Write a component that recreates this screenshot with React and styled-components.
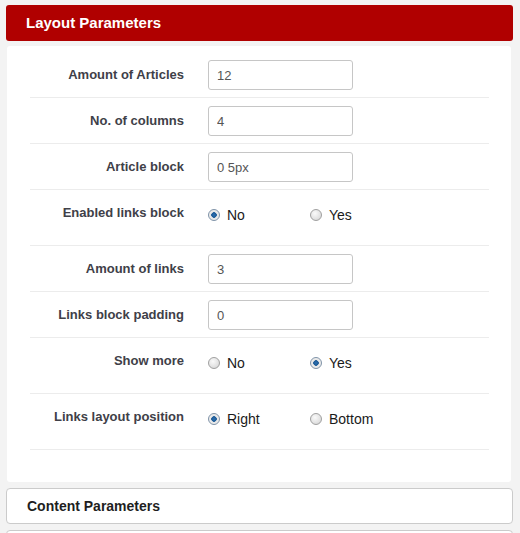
import React from "react";
import styled, { createGlobalStyle } from "styled-components";

const GlobalStyle = createGlobalStyle`
  body {
    margin: 0;
    background: #f3f3f3;
    font-family: "Liberation Sans", Arial, sans-serif;
  }
`;

const fields = [
  { label: "Amount of Articles", type: "text", value: "12" },
  { label: "No. of columns", type: "text", value: "4" },
  { label: "Article block", type: "text", value: "0 5px" },
  { label: "Enabled links block", type: "radio", options: ["No", "Yes"], checked: 0 },
  { label: "Amount of links", type: "text", value: "3" },
  { label: "Links block padding", type: "text", value: "0" },
  { label: "Show more", type: "radio", options: ["No", "Yes"], checked: 1 },
  { label: "Links layout position", type: "radio", options: ["Right", "Bottom"], checked: 0 },
];

const App = () => {
  return (
    <Page>
      <GlobalStyle />
      <ActiveHeader>Layout Parameters</ActiveHeader>
      <Body>
        {fields.map((f) => (
          <Row key={f.label}>
            <Label>{f.label}</Label>
            {f.type === "text" ? (
              <Input defaultValue={f.value} />
            ) : (
              <Radios>
                {f.options.map((o, i) => (
                  <Option key={o}>
                    <Radio checked={i === f.checked} />
                    {o}
                  </Option>
                ))}
              </Radios>
            )}
          </Row>
        ))}
      </Body>
      <Collapsed>Content Parameters</Collapsed>
      <Collapsed />
    </Page>
  );
};

export default App;

const Page = styled.div`
  padding: 5px 7px 0 6px;
  display: flex;
  flex-direction: column;
`;
const ActiveHeader = styled.div`
  height: 36px;
  background: #b00000;
  border-radius: 3px;
  color: #fff;
  font-size: 15px;
  font-weight: bold;
  line-height: 36px;
  padding-left: 20px;
`;
const Body = styled.div`
  margin: 5px 2px 6px 1px;
  background: #fff;
  border-radius: 3px;
  padding: 6px 22px 32px 23px;
`;
const Row = styled.div`
  display: flex;
  align-items: flex-start;
  gap: 24px;
  padding: 8px 0 7px;
  border-bottom: 1px solid #ececec;
`;
const Label = styled.div`
  width: 154px;
  flex-shrink: 0;
  text-align: right;
  font-size: 13px;
  font-weight: bold;
  color: #404048;
  line-height: 18px;
  padding-top: 6px;
`;
const Input = styled.input`
  box-sizing: border-box;
  width: 145px;
  height: 30px;
  border: 1px solid #c6c6c6;
  border-radius: 3px;
  padding: 0 8px;
  font-family: "Liberation Sans", Arial, sans-serif;
  font-size: 13px;
  color: #555;
  outline: none;
`;
const Radios = styled.div`
  display: flex;
  padding: 8px 0 14px;
`;
const Option = styled.label`
  width: 102px;
  display: flex;
  align-items: center;
  gap: 7px;
  font-size: 14px;
  line-height: 18px;
  color: #1a1a1a;
`;
const Radio = styled.span`
  box-sizing: border-box;
  width: 12px;
  height: 12px;
  border-radius: 50%;
  border: 1px solid ${(p) => (p.checked ? "#7f93a8" : "#a0a0a0")};
  background: ${(p) =>
    p.checked
      ? "radial-gradient(circle, #2d6fb0 0, #1b5a96 2.5px, #e6e6e6 3px, #f4f4f4 100%)"
      : "radial-gradient(circle at 40% 35%, #fafafa 0, #e2e2e2 60%, #cfcfcf 100%)"};
`;
const Collapsed = styled.div`
  height: 34px;
  border: 1px solid #cbcbcb;
  border-radius: 4px;
  background: #fff;
  margin-bottom: 6px;
  font-size: 14px;
  font-weight: bold;
  color: #1e1e1e;
  line-height: 34px;
  padding-left: 20px;
`;
